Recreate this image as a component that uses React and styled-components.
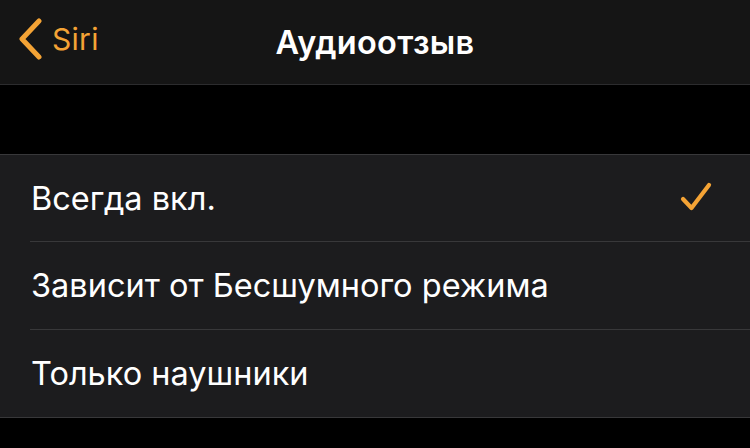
import React from 'react'
import styled, { createGlobalStyle } from 'styled-components'

const Global = createGlobalStyle`
  html, body {
    margin: 0;
    padding: 0;
    background: #000;
  }
  body {
    font-family: Inter, "Noto Sans", sans-serif;
    -webkit-font-smoothing: antialiased;
  }
`

const options = [
  { name: 'Всегда вкл.', checked: true },
  { name: 'Зависит от Бесшумного режима' },
  { name: 'Только наушники' },
]

const App = () => {
  return (
    <>
      <Global />
      <Page>
        <NavBar>
          <BackButton>
            <svg width="26" height="42" viewBox="0 0 26 42">
              <path d="M22 3 L5 21 L22 39" fill="none" stroke="#f4a335" strokeWidth="5" strokeLinecap="round" strokeLinejoin="round" />
            </svg>
            <BackLabel>Siri</BackLabel>
          </BackButton>
          <Title>Аудиоотзыв</Title>
        </NavBar>
        <Spacer />
        <List>
          {options.map((opt, i) => (
            <Row key={opt.name}>
              <RowInner $first={i === 0}>
                <RowLabel>{opt.name}</RowLabel>
                {opt.checked && (
                  <svg width="34" height="32" viewBox="0 0 34 32">
                    <path d="M3 17 L11.5 26 L29 3" fill="none" stroke="#f4a335" strokeWidth="4.2" strokeLinecap="round" strokeLinejoin="round" />
                  </svg>
                )}
              </RowInner>
            </Row>
          ))}
        </List>
      </Page>
    </>
  )
}

export default App

const Page = styled.div`
  width: 750px;
  height: 448px;
  background: #000;
  overflow: hidden;
`
const NavBar = styled.nav`
  position: relative;
  height: 84px;
  background: #151515;
  border-bottom: 1px solid #2c2c2e;
  display: flex;
  align-items: center;
  justify-content: center;
`
const BackButton = styled.div`
  position: absolute;
  left: 17px;
  top: 18px;
  display: flex;
  align-items: center;
  gap: 9px;
`
const BackLabel = styled.span`
  color: #f4a335;
  font-size: 30px;
  letter-spacing: 0.3px;
`
const Title = styled.h1`
  margin: 0;
  color: #fff;
  font-size: 32.5px;
  font-weight: 600;
  letter-spacing: 0.3px;
`
const Spacer = styled.div`
  height: 69px;
`
const List = styled.div`
  background: #1c1c1e;
  border-top: 1px solid #38383a;
  border-bottom: 1px solid #38383a;
`
const Row = styled.div`
  padding-left: 30px;
  & + & > div {
    border-top: 1px solid #38383a;
  }
`
const RowInner = styled.div`
  height: ${(p) => (p.$first ? 86 : 87)}px;
  display: flex;
  align-items: center;
  justify-content: space-between;
  padding-right: 36px;
`
const RowLabel = styled.span`
  color: #fff;
  font-size: 32.5px;
  padding-left: 1px;
`
